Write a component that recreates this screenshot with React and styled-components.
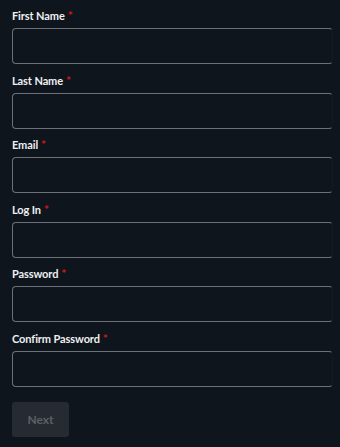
import React from 'react';
import styled, { createGlobalStyle } from 'styled-components';

const GlobalStyle = createGlobalStyle`
	html, body {
		margin: 0;
		padding: 0;
		background: #0f151c;
	}
	body {
		font-family: Lato, "Open Sans", sans-serif;
	}
`;

const fields = ['First Name', 'Last Name', 'Email', 'Log In', 'Password', 'Confirm Password'];

const Form = styled.form`
	display: flex;
	flex-direction: column;
	gap: 8.6px;
	padding: 8px 0 10px 12px;
	width: 340px;
	height: 447px;
	box-sizing: border-box;
	overflow: hidden;
`;

const Field = styled.div`
	display: flex;
	flex-direction: column;
	gap: 4px;
`;

const Label = styled.label`
	font-size: 11px;
	font-weight: 700;
	line-height: 16px;
	color: #eef0f2;
	letter-spacing: -0.1px;
`;

const Required = styled.span`
	color: #d8161f;
	margin-left: 3px;
	font-size: 12px;
`;

const Input = styled.input`
	box-sizing: border-box;
	width: 321px;
	height: 36px;
	background: transparent;
	border: 1px solid #6c7177;
	border-right-color: #151b22;
	border-radius: 4px;
	color: #eef0f2;
	font-family: inherit;
	font-size: 12px;
	padding: 0 10px;
	outline: none;
`;

const NextButton = styled.button`
	align-self: flex-start;
	margin-top: 6px;
	width: 57px;
	height: 35px;
	border: none;
	border-radius: 3px;
	background: #262b31;
	color: #5b6067;
	font-family: inherit;
	font-weight: 700;
	font-size: 12px;
	cursor: not-allowed;
`;

function App() {
	return (
		<>
			<GlobalStyle />
			<Form onSubmit={e => e.preventDefault()}>
				{fields.map(name => (
					<Field key={name}>
						<Label>{name}<Required>*</Required></Label>
						<Input type={name.includes('Password') ? 'password' : 'text'} />
					</Field>
				))}
				<NextButton disabled>Next</NextButton>
			</Form>
		</>
	);
}

export default App;
